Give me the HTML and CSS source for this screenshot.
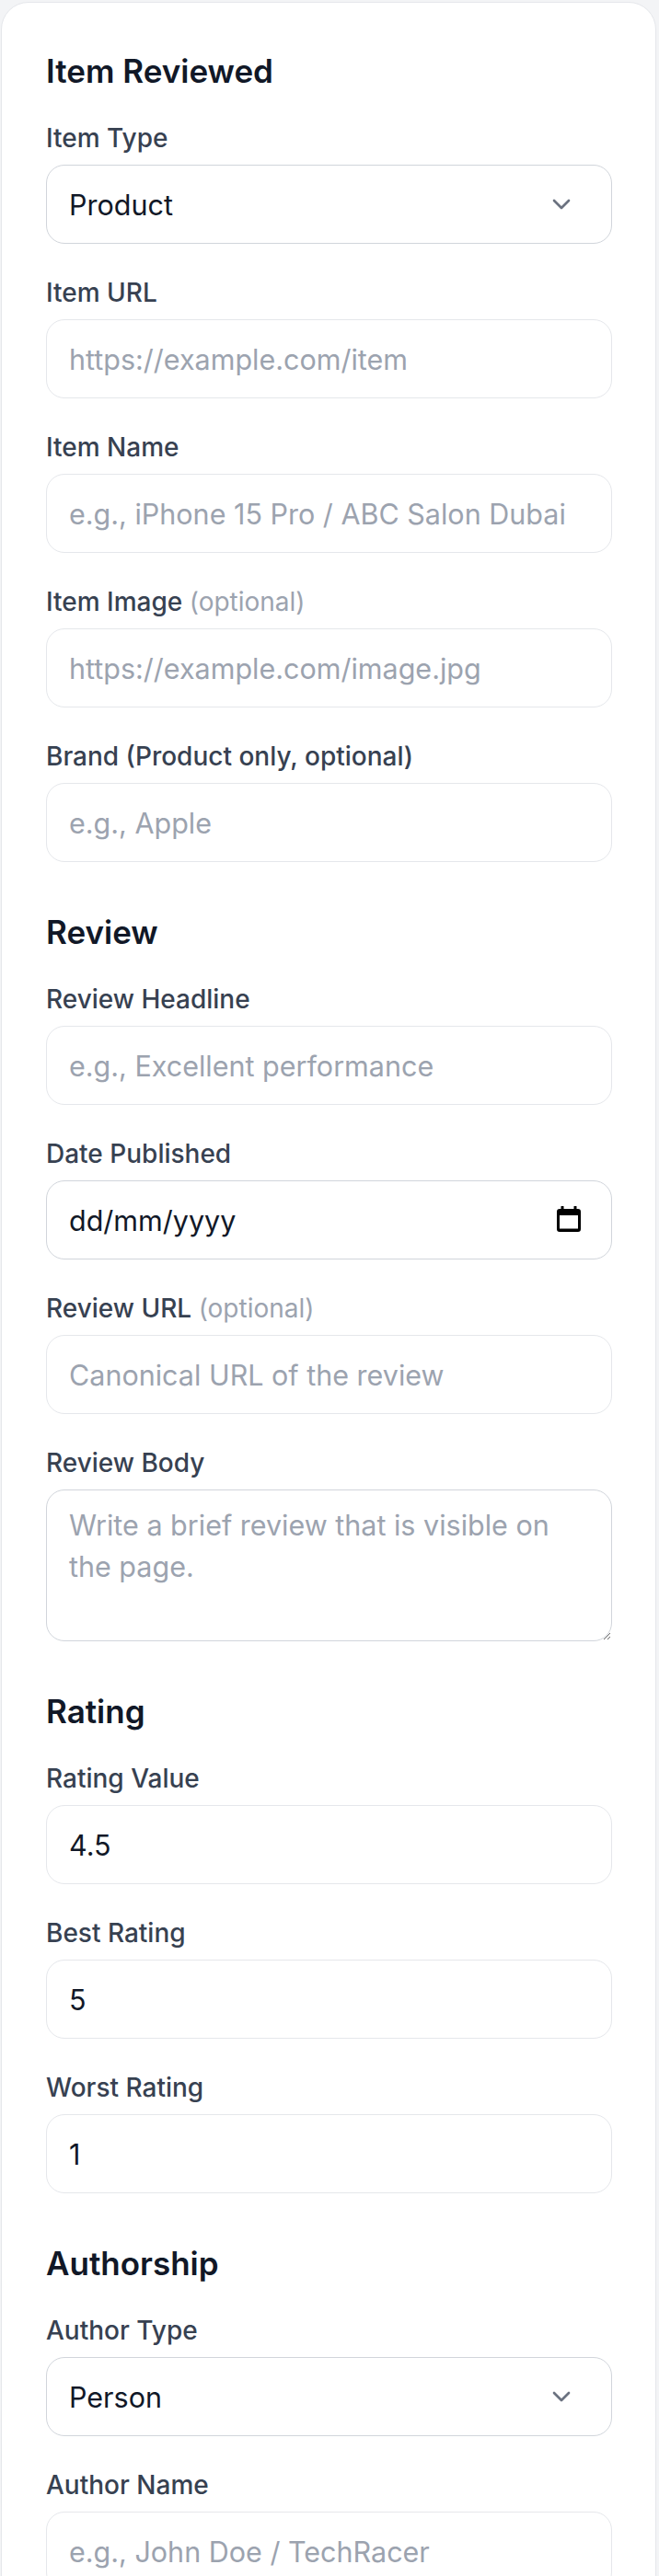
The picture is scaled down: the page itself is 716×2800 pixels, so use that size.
FILE: index.html
```html
<!DOCTYPE html>
<html lang="en">
<head>
<meta charset="utf-8">
<title>Review Schema Form</title>
<link rel="stylesheet" href="styles.css">
</head>
<body>
<div class="card">
  <form class="form">
    <section class="section">
      <h2>Item Reviewed</h2>
      <div class="fields">
        <div class="field">
          <label>Item Type</label>
          <div class="select-wrap">
            <select class="control strong"><option>Product</option><option>LocalBusiness</option></select>
            <svg class="chevron" width="32" height="32" viewBox="0 0 24 24" fill="none" stroke="currentColor" stroke-width="2" stroke-linecap="round" stroke-linejoin="round"><path d="M6 9l6 6 6-6"/></svg>
          </div>
        </div>
        <div class="field">
          <label>Item URL</label>
          <input class="control" type="text" placeholder="https://example.com/item">
        </div>
        <div class="field">
          <label>Item Name</label>
          <input class="control" type="text" placeholder="e.g., iPhone 15 Pro / ABC Salon Dubai">
        </div>
        <div class="field">
          <label>Item Image <span class="opt">(optional)</span></label>
          <input class="control" type="text" placeholder="https://example.com/image.jpg">
        </div>
        <div class="field">
          <label>Brand (Product only, optional)</label>
          <input class="control" type="text" placeholder="e.g., Apple">
        </div>
      </div>
    </section>

    <section class="section">
      <h2>Review</h2>
      <div class="fields">
        <div class="field">
          <label>Review Headline</label>
          <input class="control" type="text" placeholder="e.g., Excellent performance">
        </div>
        <div class="field">
          <label>Date Published</label>
          <div class="control strong date">
            <span>dd/mm/yyyy</span>
            <svg class="cal" width="26" height="28" viewBox="0 0 26 28" fill="currentColor"><rect x="4.5" y="0" width="3" height="5" rx="0.5"/><rect x="18.5" y="0" width="3" height="5" rx="0.5"/><path fill-rule="evenodd" d="M3 3h20a3 3 0 0 1 3 3v19a3 3 0 0 1-3 3H3a3 3 0 0 1-3-3V6a3 3 0 0 1 3-3zM3 10v14.5h20V10z"/></svg>
          </div>
        </div>
        <div class="field">
          <label>Review URL <span class="opt">(optional)</span></label>
          <input class="control" type="text" placeholder="Canonical URL of the review">
        </div>
        <div class="field">
          <label>Review Body</label>
          <textarea class="control strong area" placeholder="Write a brief review that is visible on the page."></textarea>
        </div>
      </div>
    </section>

    <section class="section">
      <h2>Rating</h2>
      <div class="fields">
        <div class="field">
          <label>Rating Value</label>
          <input class="control" type="text" value="4.5">
        </div>
        <div class="field">
          <label>Best Rating</label>
          <input class="control" type="text" value="5">
        </div>
        <div class="field">
          <label>Worst Rating</label>
          <input class="control" type="text" value="1">
        </div>
      </div>
    </section>

    <section class="section">
      <h2>Authorship</h2>
      <div class="fields">
        <div class="field">
          <label>Author Type</label>
          <div class="select-wrap">
            <select class="control strong"><option>Person</option><option>Organization</option></select>
            <svg class="chevron" width="32" height="32" viewBox="0 0 24 24" fill="none" stroke="currentColor" stroke-width="2" stroke-linecap="round" stroke-linejoin="round"><path d="M6 9l6 6 6-6"/></svg>
          </div>
        </div>
        <div class="field">
          <label>Author Name</label>
          <input class="control" type="text" placeholder="e.g., John Doe / TechRacer">
        </div>
      </div>
    </section>
  </form>
</div>
</body>
</html>
```

FILE: styles.css
```css
* {
  box-sizing: border-box;
}

html, body {
  margin: 0;
}

body {
  padding: 2px 3px 0 1px;
  background: #f3f4f6;
  font-family: Inter, "Noto Sans", "Liberation Sans", sans-serif;
  color: #111827;
}

.card {
  background: #ffffff;
  border: 1px solid #e5e7eb;
  border-radius: 30px;
  padding: 50px 47px 60px 48px;
}

.form {
  display: flex;
  flex-direction: column;
  gap: 52px;
}

.section {
  display: flex;
  flex-direction: column;
}

.section h2 {
  margin: 0 0 29px;
  font-size: 35px;
  line-height: 48px;
  font-weight: 600;
  color: #111827;
}

.fields {
  display: flex;
  flex-direction: column;
  gap: 33px;
}

.field {
  display: flex;
  flex-direction: column;
}

.field label {
  display: block;
  margin-bottom: 9px;
  font-size: 28px;
  line-height: 40px;
  font-weight: 500;
  color: #374151;
}

.field label .opt {
  font-weight: 400;
  color: #9ca3af;
}

.control {
  display: block;
  width: 100%;
  height: 86px;
  margin: 0;
  padding: 0 24px;
  border: 1px solid #e5e7eb;
  border-radius: 20px;
  background: #ffffff;
  font-family: inherit;
  font-size: 30.5px;
  line-height: 45px;
  color: #111827;
  outline: none;
}

.control.strong {
  border-color: #d1d5db;
}

.control::placeholder {
  color: #9ca3af;
  opacity: 1;
}

.select-wrap {
  position: relative;
}

.select-wrap select {
  appearance: none;
  -webkit-appearance: none;
}

.chevron {
  position: absolute;
  right: 39px;
  top: 50%;
  transform: translateY(-50%);
  color: #6b7280;
  pointer-events: none;
}

.date {
  display: flex;
  align-items: center;
  justify-content: space-between;
  padding-right: 33px;
}

.cal {
  display: block;
  color: #000000;
  margin-top: -3px;
}

.area {
  height: 165px;
  padding: 15px 24px;
}
```
